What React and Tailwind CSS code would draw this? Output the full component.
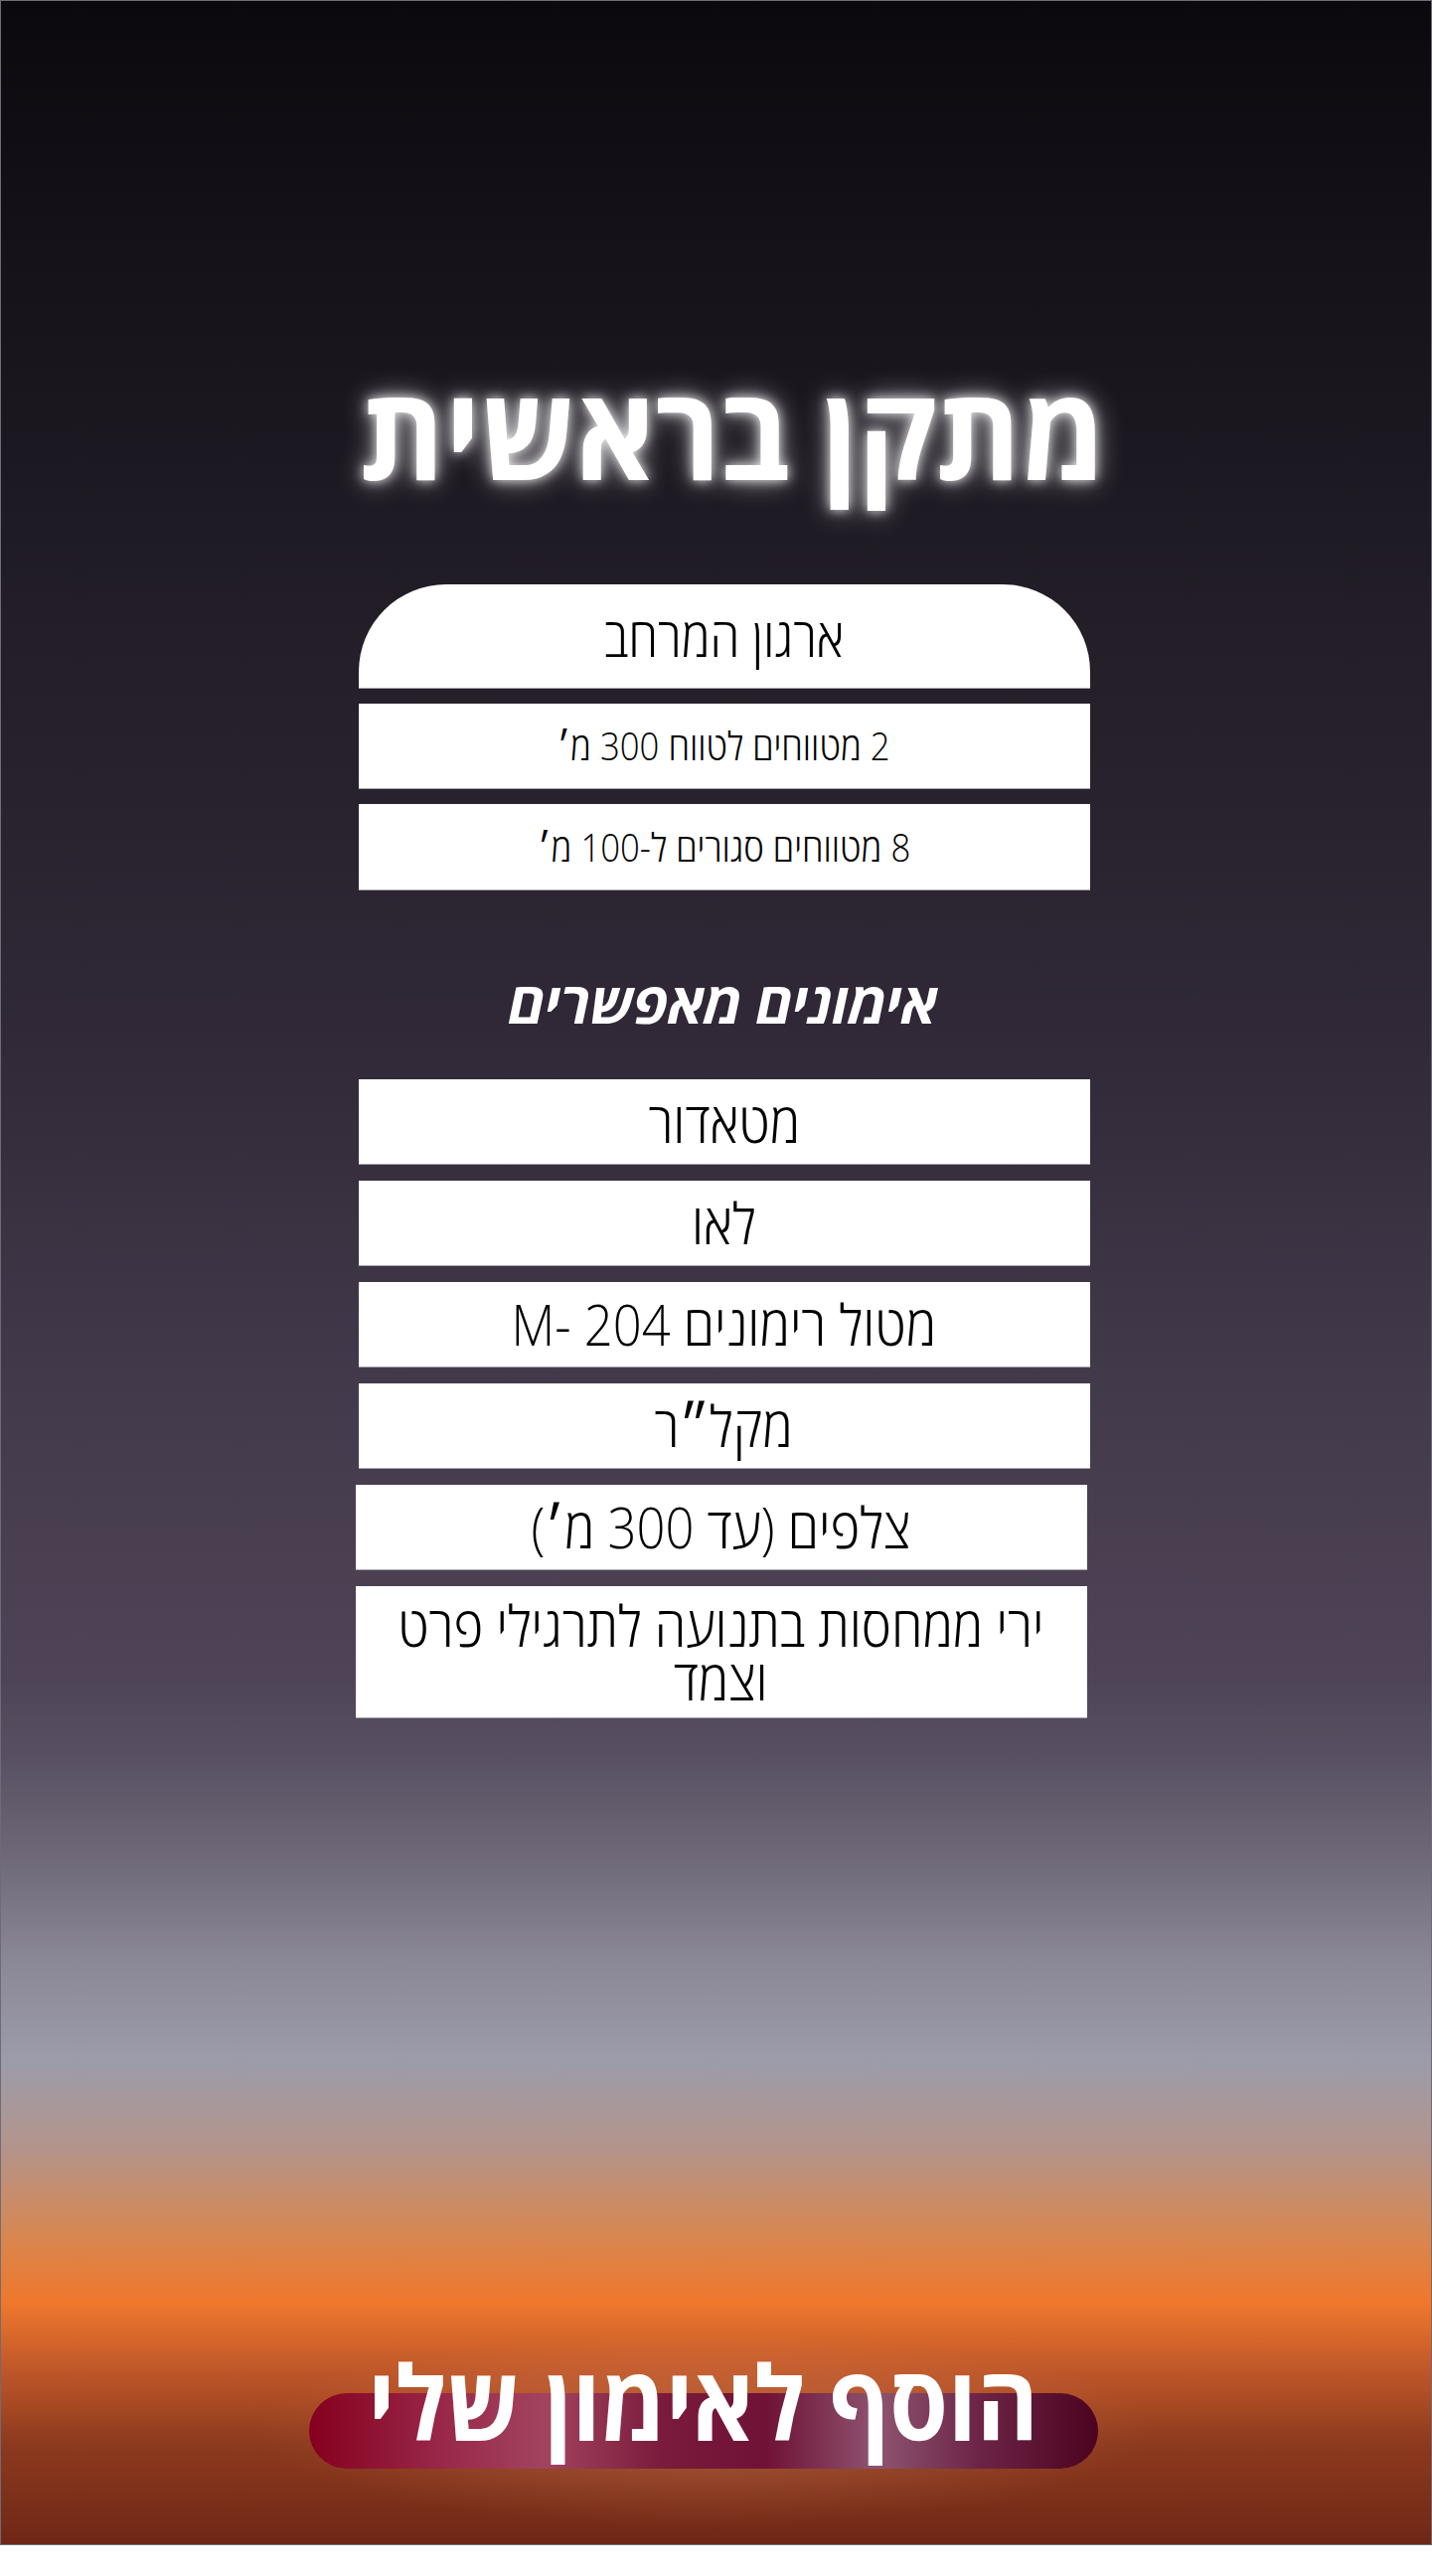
import React from "react";

const font = { fontFamily: '"Open Sans", "Noto Sans", "DejaVu Sans", sans-serif' };

function Row({ children, className = "" }) {
  return (
    <div
      className={`w-[736px] bg-white flex items-center justify-center text-center text-black font-light [font-stretch:90%] border-b border-[#a9a4ad] ${className}`}
    >
      <span className="inline-block whitespace-nowrap scale-x-[0.89]">{children}</span>
    </div>
  );
}

export default function App() {
  return (
    <div dir="rtl" className="w-[1441px] h-[2592px] bg-white" style={font}>
      <div className="relative w-[1441px] h-[2561px] border border-[#6f6b74] overflow-hidden bg-[linear-gradient(to_bottom,#0b090e_0%,#15121a_10%,#231e28_25%,#302836_40%,#433a4b_55%,#4f4457_66%,#585062_69%,#6e6878_73%,#8a8796_77%,#9c9caa_81%,#b4948a_84.5%,#d9864e_88%,#ef772c_90.5%,#c2592a_93%,#8d3a1e_96%,#6f2716_100%)] flex flex-col items-center">
        <h1 className="mt-[362px] ml-[34px] h-[140px] leading-[140px] text-[130px] font-bold [font-stretch:90%] scale-x-[0.945] text-white [text-shadow:0_0_12px_rgba(255,255,255,0.9),0_0_28px_rgba(255,255,255,0.6)]">
          מתקן בראשית
        </h1>

        <div className="mt-[85px] ml-[16px] flex flex-col gap-[15px]">
          <Row className="h-[105px] rounded-t-[88px] text-[54px]">ארגון המרחב</Row>
          <Row className="h-[86px] text-[39px]">2 מטווחים לטווח 300 מ׳</Row>
          <Row className="h-[87px] text-[39px]">8 מטווחים סגורים ל-100 מ׳</Row>
        </div>

        <h2 className="mt-[82px] ml-[14px] h-[60px] leading-[60px] text-[57px] font-bold italic [font-stretch:90%] text-white">
          אימונים מאפשרים
        </h2>

        <div className="mt-[48px] ml-[16px] flex flex-col gap-[16px]">
          <Row className="h-[86px] text-[57px]">מטאדור</Row>
          <Row className="h-[86px] text-[57px]">לאו</Row>
          <Row className="h-[86px] text-[57px]">מטול רימונים M- 204</Row>
          <Row className="h-[86px] text-[57px]">מקל״ר</Row>
          <Row className="h-[86px] text-[57px] -translate-x-[3px]">צלפים (עד 300 מ׳)</Row>
          <Row className="h-[133px] text-[57px] leading-[54px] -translate-x-[3px]">
            ירי ממחסות בתנועה לתרגילי פרט
            <br />
            וצמד
          </Row>
        </div>

        <div className="relative mt-auto mb-[76px] mr-[26px] w-[794px] h-[76px]">
          <div className="absolute -inset-x-[60px] -top-[60px] -bottom-[60px] rounded-full bg-[radial-gradient(ellipse_at_center,rgba(230,150,110,0.35),rgba(230,150,110,0)_70%)]" />
          <div className="absolute inset-0 rounded-[40px] bg-[linear-gradient(to_right,#86001f_0%,#9a2a4c_18%,#a2445f_30%,#7a1a3c_45%,#6f1236_58%,#8e5470_72%,#6c2446_85%,#4c0320_100%)]" />
          <div className="absolute inset-x-0 -top-[62px] h-[140px] flex items-center justify-center text-white text-[104px] font-bold [font-stretch:90%] leading-none">
            <span className="inline-block whitespace-nowrap scale-x-[0.91]">הוסף לאימון שלי</span>
          </div>
        </div>
      </div>
    </div>
  );
}
